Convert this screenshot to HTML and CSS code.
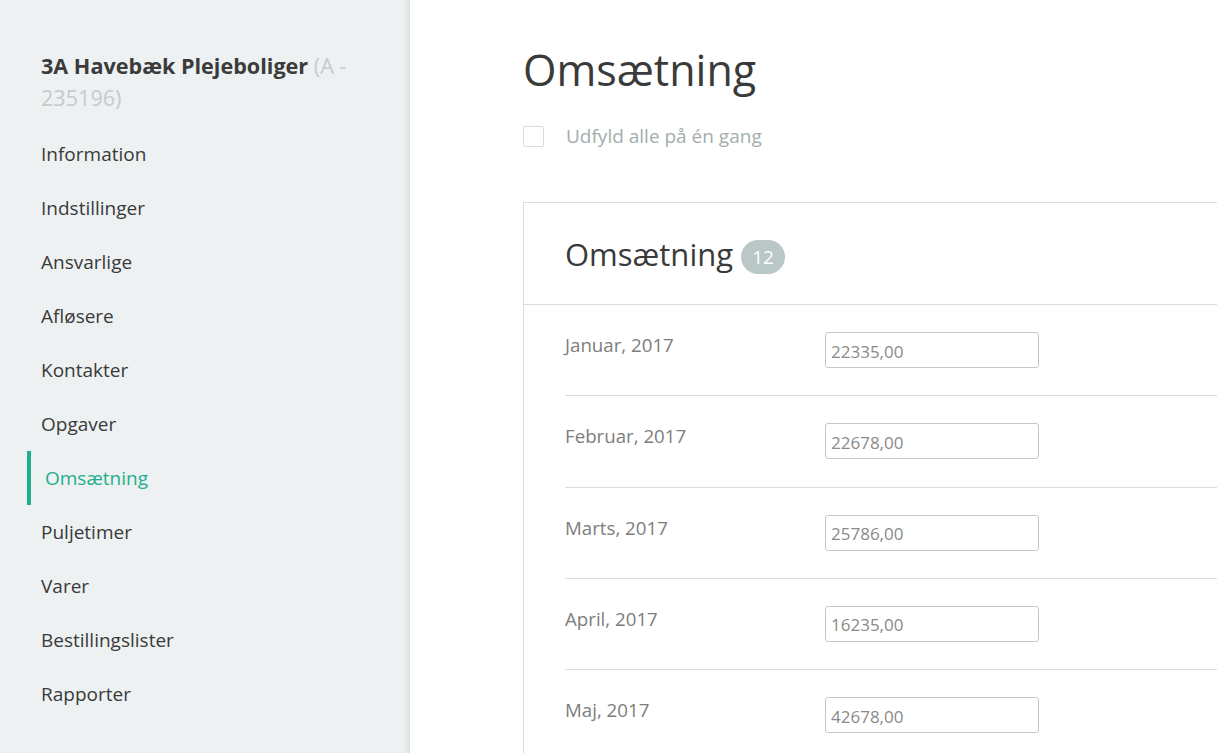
FILE: index.html
```html
<!DOCTYPE html>
<html lang="da">
<head>
<meta charset="utf-8">
<title>Omsætning</title>
<link rel="stylesheet" href="styles.css">
</head>
<body>
<div class="layout">
  <aside class="sidebar">
    <h2 class="org"><strong>3A Havebæk Plejeboliger</strong> <span class="org-id">(A - 235196)</span></h2>
    <nav class="nav">
      <a class="nav-item" href="#">Information</a>
      <a class="nav-item" href="#">Indstillinger</a>
      <a class="nav-item" href="#">Ansvarlige</a>
      <a class="nav-item" href="#">Afløsere</a>
      <a class="nav-item" href="#">Kontakter</a>
      <a class="nav-item" href="#">Opgaver</a>
      <a class="nav-item active" href="#">Omsætning</a>
      <a class="nav-item" href="#">Puljetimer</a>
      <a class="nav-item" href="#">Varer</a>
      <a class="nav-item" href="#">Bestillingslister</a>
      <a class="nav-item" href="#">Rapporter</a>
    </nav>
  </aside>
  <main class="main">
    <h1 class="title">Omsætning</h1>
    <label class="check-row"><span class="checkbox"></span><span class="check-label">Udfyld alle på én gang</span></label>
    <section class="card">
      <header class="card-head">
        <h3 class="card-title">Omsætning</h3>
        <span class="badge">12</span>
      </header>
      <div class="rows">
        <div class="row"><span class="month">Januar, 2017</span><input class="amount" type="text" value="22335,00"></div>
        <div class="row"><span class="month">Februar, 2017</span><input class="amount" type="text" value="22678,00"></div>
        <div class="row"><span class="month">Marts, 2017</span><input class="amount" type="text" value="25786,00"></div>
        <div class="row"><span class="month">April, 2017</span><input class="amount" type="text" value="16235,00"></div>
        <div class="row"><span class="month">Maj, 2017</span><input class="amount" type="text" value="42678,00"></div>
      </div>
    </section>
  </main>
</div>
</body>
</html>
```
FILE: styles.css
```css
* { box-sizing: border-box; }
html, body {
  margin: 0;
  height: 100%;
  overflow: hidden;
}
body {
  font-family: "Open Sans", "Liberation Sans", sans-serif;
  background: #ffffff;
  color: #3a3a3a;
}
.layout {
  display: flex;
  height: 753px;
  overflow: hidden;
}
.sidebar {
  width: 410px;
  flex: 0 0 410px;
  background: #edf1f2;
  box-shadow: inset -5px 0 4px -2px rgba(0,0,0,0.07);
  padding: 50px 0 0 0;
}
.org {
  margin: 0 60px 13px 41px;
  font-size: 21.6px;
  line-height: 32px;
  font-weight: 400;
}
.org strong {
  font-weight: 700;
  color: #3b3b3b;
}
.org-id {
  color: #c2cccd;
}
.nav {
  display: flex;
  flex-direction: column;
}
.nav-item {
  display: block;
  height: 54px;
  line-height: 54px;
  padding-left: 41px;
  font-size: 19px;
  color: #3a3a3a;
  text-decoration: none;
}
.nav-item.active {
  color: #1fae8e;
  margin-left: 27px;
  padding-left: 14px;
  border-left: 4px solid #1fae8e;
}
.main {
  flex: 1;
  padding: 40px 0 0 113px;
  min-width: 0;
  overflow: hidden;
}
.title {
  margin: 0;
  font-size: 43px;
  font-weight: 400;
  line-height: 60px;
  color: #3a3a3a;
}
.check-row {
  display: flex;
  align-items: center;
  gap: 22px;
  margin-top: 18px;
  height: 36px;
}
.checkbox {
  width: 21px;
  height: 21px;
  border: 1px solid #dcdcdc;
  border-radius: 2px;
  background: #fff;
}
.check-label {
  font-size: 19px;
  color: #a4adae;
}
.card {
  margin-top: 48px;
  border: 1px solid #dcdcdc;
  border-right: none;
}
.card-head {
  display: flex;
  align-items: center;
  gap: 8px;
  height: 102px;
  padding-left: 41px;
  border-bottom: 1px solid #dcdcdc;
}
.card-title {
  margin: 0;
  font-size: 31px;
  font-weight: 400;
  color: #3a3a3a;
}
.badge {
  display: inline-flex;
  align-items: center;
  justify-content: center;
  width: 44px;
  height: 34px;
  border-radius: 17px;
  background: #b9c7c6;
  color: #ffffff;
  font-size: 19px;
  margin-top: 6px;
}
.rows {
  padding-left: 41px;
}
.row {
  display: flex;
  align-items: flex-start;
  height: 91.3px;
  padding-top: 27px;
  border-bottom: 1px solid #dcdcdc;
}
.month {
  width: 260px;
  font-size: 18.7px;
  color: #7d7d7d;
  line-height: 26px;
}
.amount {
  width: 214px;
  height: 36px;
  border: 1px solid #bfcbcb;
  border-radius: 3px;
  padding: 2px 5px 0;
  font-family: "Open Sans", "Liberation Sans", sans-serif;
  font-size: 17px;
  color: #8a8a8a;
  background: #fff;
  outline: none;
}
```
